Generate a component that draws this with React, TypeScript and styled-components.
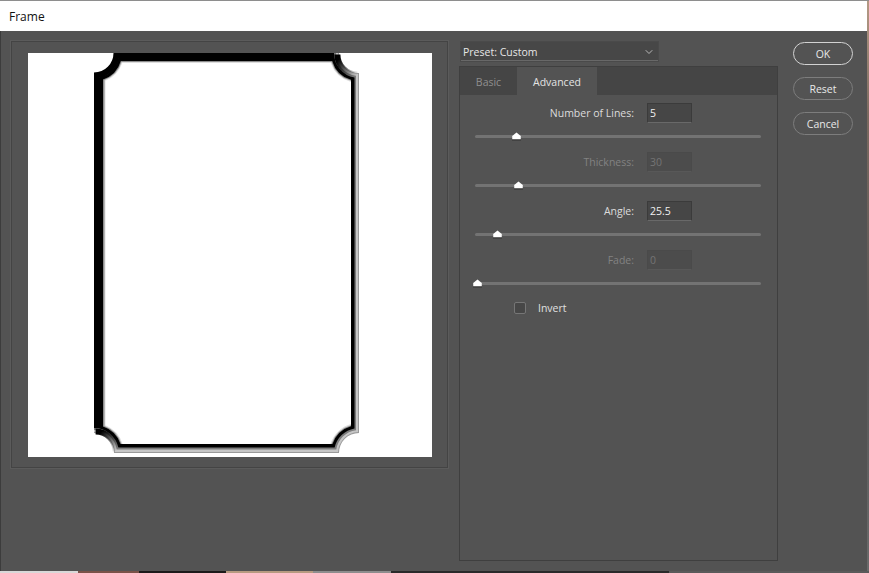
import styled, { createGlobalStyle } from 'styled-components';
import { FC } from 'react';
import { ChevronDown } from 'lucide-react';

const GlobalStyle = createGlobalStyle`
	html, body {
		margin: 0;
		padding: 0;
		background: #535353;
	}
	body {
		font-family: "Open Sans", "Liberation Sans", sans-serif;
		font-size: 10.5px;
		color: #e4e4e4;
	}
`;

type SliderField = {
	label: string;
	value: string;
	thumb: number;
	disabled?: boolean;
}

const fields: SliderField[] = [
	{ label: 'Number of Lines:', value: '5', thumb: 41 },
	{ label: 'Thickness:', value: '30', thumb: 43, disabled: true },
	{ label: 'Angle:', value: '25.5', thumb: 22 },
	{ label: 'Fade:', value: '0', thumb: 2, disabled: true },
];

// the notches always circle the outer corners of the frame
const L = 94, T = 53, R = 359, B = 453;

const band = (l: number, t: number, r: number, b: number, rad: number) => {
	const dx = (e: number) => Math.sqrt(rad * rad - e * e);
	const tl = dx(t - T), tr = dx(R - r), bl = dx(l - L), br = dx(B - b);
	return [
		`M${L + tl} ${t}`,
		`H${R - tl}`,
		`A${rad} ${rad} 0 0 0 ${r} ${T + tr}`,
		`V${B - tr}`,
		`A${rad} ${rad} 0 0 0 ${R - br} ${b}`,
		`H${L + br}`,
		`A${rad} ${rad} 0 0 0 ${l} ${B - bl}`,
		`V${T + bl}`,
		`A${rad} ${rad} 0 0 0 ${L + tl} ${t}`,
		'Z',
	].join('');
};

const FramePreview: FC = () => (
	<svg width="404" height="404" viewBox="28 53 404 404" style={{ display: 'block' }}>
		<defs>
			<linearGradient id="fadeTopRight" gradientUnits="userSpaceOnUse" x1="340" y1="58" x2="357" y2="75">
				<stop offset="0" stopColor="#000" />
				<stop offset="1" stopColor="#000" stopOpacity="0" />
			</linearGradient>
			<linearGradient id="fadeBottomLeft" gradientUnits="userSpaceOnUse" x1="98" y1="435" x2="115" y2="452">
				<stop offset="0" stopColor="#000" />
				<stop offset="1" stopColor="#000" stopOpacity="0" />
			</linearGradient>
		</defs>
		<path d={band(94, 53, 359, 453, 20)} fill="#9a9a9a" />
		<path d={band(94, 53, 358, 452, 21)} fill="#c6c6c6" />
		<path d={band(94, 53, 356, 449.5, 23)} fill="#7c7c7c" />
		<path d={band(94, 53, 354.5, 447.5, 25)} fill="#000" />
		<path d="M116.5 53A22.5 22.5 0 0 1 94 75.5" fill="none" stroke="#000" strokeWidth="6" />
		<path d="M339 53A20 20 0 0 0 359 73" transform="translate(-1.6 1.6)" fill="none" stroke="url(#fadeTopRight)" strokeWidth="6" />
		<path d="M94 433A20 20 0 0 1 114 453" transform="translate(1.6 -1.6)" fill="none" stroke="url(#fadeBottomLeft)" strokeWidth="6" />
		<path d={band(103, 61, 351, 444, 28)} fill="#8c8c8c" />
		<path d={band(104.5, 62, 351, 444, 29)} fill="#dedede" />
		<path d={band(105.5, 63, 351, 444, 30)} fill="#fff" />
	</svg>
);

const App: FC = () => (
	<>
		<GlobalStyle />
		<SPage>
			<STopStrip />
			<SMiddle>
				<SWindow>
					<STitleBar>Frame</STitleBar>
					<SBody>
						<SPreviewPanel>
							<SCanvas>
								<FramePreview />
							</SCanvas>
						</SPreviewPanel>
						<SSettings>
							<SPreset>
								<span>Preset: Custom</span>
								<ChevronDown size={12} strokeWidth={2} color="#b8b8b8" />
							</SPreset>
							<STabPanel>
								<STabs>
									<STab>Basic</STab>
									<STab $active>Advanced</STab>
								</STabs>
								<SFields>
									{fields.map((field) => (
										<div key={field.label}>
											<SFieldRow>
												<SFieldLabel $disabled={field.disabled}>{field.label}</SFieldLabel>
												<SValue $disabled={field.disabled}>{field.value}</SValue>
											</SFieldRow>
											<SSlider>
												<STrack />
												<SThumb $left={field.thumb} viewBox="0 0 11 9">
													<path d="M1 5.5H10V8.5H1Z" fill="#333" />
													<path d="M5.5 .6L9.8 4V7.2H1.2V4Z" fill="#fff" />
												</SThumb>
											</SSlider>
										</div>
									))}
									<SInvertRow>
										<SCheckbox />
										<span>Invert</span>
									</SInvertRow>
								</SFields>
							</STabPanel>
						</SSettings>
						<SButtons>
							<SButton $primary>OK</SButton>
							<SButton>Reset</SButton>
							<SButton>Cancel</SButton>
						</SButtons>
					</SBody>
				</SWindow>
				<SRightStrip />
			</SMiddle>
			<SBottomStrip />
		</SPage>
	</>
);

export default App;

const SPage = styled.div`
	width: 869px;
	height: 573px;
	display: flex;
	flex-direction: column;
	overflow: hidden;
`;

const STopStrip = styled.div`
	height: 1px;
	background: #8e8e8e;
`;

const SMiddle = styled.div`
	flex: 1;
	display: flex;
	min-height: 0;
`;

const SWindow = styled.div`
	flex: 1;
	display: flex;
	flex-direction: column;
	background: #535353;
	border-left: 1px solid #3c3c3c;
`;

const SRightStrip = styled.div`
	width: 2px;
	background: linear-gradient(180deg, #b59a85 0%, #7c6a60 20%, #545454 60%, #6a6a6a 100%);
`;

const SBottomStrip = styled.div`
	height: 2px;
	background: linear-gradient(90deg, #d8d8d8 0 9%, #7a5248 9% 16%, #1c1a1a 16% 26%, #b79a80 26% 36%, #8d8d8d 36% 45%, #2a2a2a 45% 77%, #5a5a5a 77% 100%);
`;

const STitleBar = styled.div`
	height: 30px;
	flex-shrink: 0;
	margin-left: -1px;
	padding-left: 9px;
	display: flex;
	align-items: center;
	background: #fff;
	color: #111;
	font-size: 12px;
`;

const SBody = styled.div`
	flex: 1;
	display: flex;
	align-items: flex-start;
	padding: 10px 0 0 10px;
`;

const SPreviewPanel = styled.div`
	width: 437px;
	height: 427px;
	box-sizing: border-box;
	padding: 11px 0 0 16px;
	border: 1px solid #444;
	box-shadow: 0 0 0 1px #5b5b5b;
`;

const SCanvas = styled.div`
	width: 404px;
	height: 404px;
	background: #fff;
`;

const SSettings = styled.div`
	width: 319px;
	margin-left: 11px;
	display: flex;
	flex-direction: column;
`;

const SPreset = styled.div`
	width: 197px;
	height: 19px;
	margin: 1px 0 0 2px;
	padding: 1px 3px 0 2px;
	box-sizing: border-box;
	display: flex;
	align-items: center;
	justify-content: space-between;
	background: #474747;
	border-bottom: 1px solid #686868;
	box-shadow: 0 0 0 1px #4a4a4a;
	color: #e6e6e6;
	white-space: nowrap;
`;

const STabPanel = styled.div`
	height: 495px;
	margin-top: 5px;
	box-sizing: border-box;
	border: 1px solid #3f3f3f;
`;

const STabs = styled.div`
	height: 28px;
	display: flex;
	background: #454545;
`;

const STab = styled.div<{ $active?: boolean }>`
	width: ${(p) => (p.$active ? '80px' : '57px')};
	padding-top: 2px;
	box-sizing: border-box;
	display: flex;
	align-items: center;
	justify-content: center;
	background: ${(p) => (p.$active ? '#535353' : 'transparent')};
	color: ${(p) => (p.$active ? '#e4e4e4' : '#8f8f8f')};
`;

const SFields = styled.div`
	padding-top: 8px;
`;

const SFieldRow = styled.div`
	height: 20px;
	display: flex;
	align-items: center;
`;

const SFieldLabel = styled.div<{ $disabled?: boolean }>`
	width: 174px;
	text-align: right;
	color: ${(p) => (p.$disabled ? '#828282' : '#dcdcdc')};
	white-space: nowrap;
`;

const SValue = styled.div<{ $disabled?: boolean }>`
	width: 45px;
	height: 20px;
	margin-left: 13px;
	padding-left: 2px;
	box-sizing: border-box;
	display: flex;
	align-items: center;
	background: ${(p) => (p.$disabled ? '#4c4c4c' : '#464646')};
	border: 1px solid ${(p) => (p.$disabled ? '#4a4a4a' : '#3b3b3b')};
	border-bottom-color: ${(p) => (p.$disabled ? '#585858' : '#696969')};
	color: ${(p) => (p.$disabled ? '#747474' : '#f0f0f0')};
`;

const SSlider = styled.div`
	position: relative;
	width: 286px;
	height: 29px;
	margin-left: 15px;
	padding-top: 12px;
	box-sizing: border-box;
`;

const STrack = styled.div`
	height: 3px;
	background: #737373;
	border-radius: 2px;
`;

const SThumb = styled.svg<{ $left: number }>`
	position: absolute;
	left: ${(p) => p.$left - 5.5}px;
	top: 9px;
	width: 11px;
	height: 9px;
`;

const SInvertRow = styled.div`
	margin: 2px 0 0 54px;
	height: 13px;
	display: flex;
	align-items: center;
	gap: 12px;
	color: #e0e0e0;
`;

const SCheckbox = styled.div`
	width: 12px;
	height: 12px;
	box-sizing: border-box;
	background: #474747;
	border: 1px solid #767676;
	border-radius: 2px;
`;

const SButtons = styled.div`
	margin: 1px 0 0 15px;
	display: flex;
	flex-direction: column;
	gap: 12px;
`;

const SButton = styled.div<{ $primary?: boolean }>`
	width: 60px;
	height: 23px;
	box-sizing: border-box;
	display: flex;
	align-items: center;
	justify-content: center;
	border: 1px solid ${(p) => (p.$primary ? '#d2d2d2' : '#7d7d7d')};
	border-radius: 12px;
	color: #e8e8e8;
`;
